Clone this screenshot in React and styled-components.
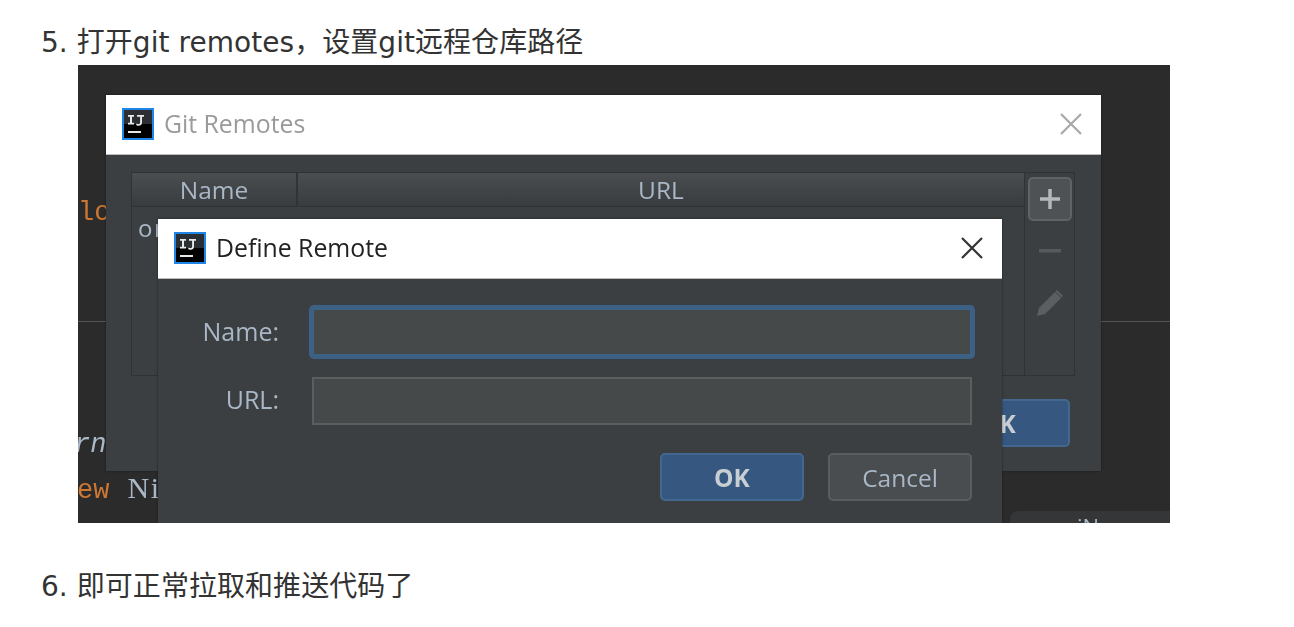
import React from "react";
import styled, { createGlobalStyle } from "styled-components";

const GlobalStyle = createGlobalStyle`
  html, body {
    margin: 0;
    padding: 0;
    background: #fff;
  }
  body {
    font-family: "Open Sans", "Noto Sans CJK SC", sans-serif;
  }
`;

const Page = styled.div`
  width: 1294px;
  height: 627px;
  overflow: hidden;
  background: #fff;
  padding-top: 24px;
  box-sizing: border-box;
`;

const StepList = styled.ol`
  list-style: none;
  margin: 0;
  padding: 0 0 0 41px;
`;

const Step = styled.li`
  display: flex;
  flex-direction: column;
  margin-bottom: ${(p) => p.$gap || 0}px;
`;

const StepText = styled.p`
  margin: 0;
  height: 41px;
  font-family: "DejaVu Sans", "Noto Sans CJK SC", sans-serif;
  font-size: 28px;
  letter-spacing: 0.05px;
  line-height: 38px;
  color: #333;
  white-space: pre;
`;

/* the screenshot inside the article: windows lie on it like on a desktop */
const Shot = styled.div`
  position: relative;
  width: 1092px;
  height: 458px;
  margin-left: 37px;
  background: #2b2b2b;
  overflow: hidden;
  filter: blur(0.45px);
`;

const CodeText = styled.span`
  position: absolute;
  left: ${(p) => p.$x}px;
  top: ${(p) => p.$y}px;
  font-family: "Liberation Mono", "DejaVu Sans Mono", monospace;
  font-size: 27px;
  line-height: 32px;
  font-style: ${(p) => (p.$italic ? "italic" : "normal")};
  color: ${(p) => p.$color || "#a9b7c6"};
  white-space: pre;
`;

const SerifName = styled.span`
  margin-left: 2px;
  font-family: "Liberation Serif", serif;
  font-size: 30px;
  letter-spacing: 1.5px;
  color: #a9b7c6;
`;

const Rule = styled.div`
  position: absolute;
  left: 0;
  right: 0;
  top: 256px;
  height: 1px;
  background: #555;
`;

const TabEdge = styled.div`
  position: absolute;
  left: 932px;
  top: 446px;
  width: 170px;
  height: 20px;
  border-radius: 8px 0 0 0;
  background: #343638;
  overflow: hidden;
`;

const TabText = styled.span`
  position: absolute;
  left: 67px;
  top: 2px;
  font-size: 22px;
  line-height: 26px;
  color: #a9b7c6;
`;

const Win = styled.div`
  position: absolute;
  left: ${(p) => p.$x}px;
  top: ${(p) => p.$y}px;
  width: ${(p) => p.$w}px;
  height: ${(p) => p.$h}px;
  display: flex;
  flex-direction: column;
  background: #3c3f41;
  box-shadow: 0 0 2px rgba(0, 0, 0, 0.5);
`;

const TitleBar = styled.div`
  flex: 0 0 60px;
  display: flex;
  align-items: center;
  gap: 10px;
  padding: 0 19px 2px 16px;
  background: #fff;
  box-sizing: border-box;
  border-bottom: 1px solid #bbb;
`;

const TitleText = styled.span`
  flex: 1;
  font-size: 24.8px;
  line-height: 32px;
  padding-bottom: 1px;
  color: ${(p) => (p.$dim ? "#9a9a9a" : "#222")};
`;

const WinBody = styled.div`
  flex: 1;
  position: relative;
  min-height: 0;
`;

const TableArea = styled.div`
  display: flex;
  margin: 17px 0 0 25px;
  width: 944px;
  height: 204px;
  border: 1px solid #323232;
  box-sizing: border-box;
`;

const Table = styled.div`
  flex: 0 0 892px;
  display: flex;
  flex-direction: column;
  border-right: 1px solid #323232;
`;

const TableHead = styled.div`
  flex: 0 0 33px;
  display: flex;
  background: linear-gradient(#4b4e50, #393c3e);
  border-bottom: 1px solid #323232;
`;

const HeadCell = styled.div`
  flex: ${(p) => (p.$w ? `0 0 ${p.$w}px` : 1)};
  box-sizing: border-box;
  display: flex;
  align-items: center;
  justify-content: center;
  font-size: 24.5px;
  color: #a9b7c6;
  border-right: ${(p) => (p.$w ? "2px solid #333" : "none")};
`;

const TableRow = styled.div`
  padding: 6px 0 0 6px;
  font-size: 24px;
  line-height: 30px;
  letter-spacing: 1.5px;
  color: #a9b7c6;
  white-space: pre;
  overflow: hidden;
`;

const SideBar = styled.div`
  flex: 1;
  display: flex;
  flex-direction: column;
  align-items: center;
  padding-top: 4px;
`;

const ToolButton = styled.div`
  width: 44px;
  height: 44px;
  display: flex;
  align-items: center;
  justify-content: center;
  margin-bottom: ${(p) => p.$mb || 0}px;
  box-sizing: border-box;
  border-radius: 5px;
  background: ${(p) => (p.$active ? "#4e5254" : "transparent")};
  border: ${(p) => (p.$active ? "2px solid #5f6365" : "none")};
`;

const Actions = styled.div`
  position: absolute;
  display: flex;
  gap: 24px;
  right: ${(p) => p.$right}px;
  top: ${(p) => p.$top}px;
`;

const Btn = styled.div`
  width: ${(p) => p.$w || 144}px;
  height: 48px;
  display: flex;
  align-items: center;
  justify-content: center;
  box-sizing: border-box;
  border-radius: 5px;
  font-size: 24.5px;
  font-weight: ${(p) => (p.$primary ? 700 : 400)};
  color: ${(p) => (p.$primary ? "#c9ced3" : "#a9b7c6")};
  background: ${(p) => (p.$primary ? "#365880" : "#4a4d4f")};
  border: 2px solid ${(p) => (p.$primary ? "#43688f" : "#5a5d5f")};
`;

const Form = styled.div`
  display: grid;
  grid-template-columns: 121px 660px;
  grid-auto-rows: 48px;
  row-gap: 21px;
  align-items: center;
  column-gap: 33px;
  padding: 29px 0 0 0;
`;

const Label = styled.label`
  text-align: right;
  font-size: 25px;
  padding-bottom: ${(p) => p.$pb || 0}px;
  color: #a9b7c6;
`;

const Field = styled.div`
  position: relative;
  height: 48px;
  box-sizing: border-box;
  background: #45494a;
  border: 2px solid #5b5d5e;
  ${(p) => p.$focus && "box-shadow: 0 0 0 3px #3d6185; border-color: #3d6185; border-radius: 2px;"}
`;

function IdeaLogo() {
  return (
    <svg width="32" height="32" viewBox="0 0 32 32">
      <rect x="1" y="1" width="30" height="30" fill="#000" stroke="#1f86e8" strokeWidth="2" />
      <rect x="2" y="2" width="28" height="14" fill="#2b2f33" />
      <path d="M6 7h6v1.8h-2v6h2v1.8H6v-1.8h2v-6H6z M15 7h7v1.8h-2v6c0 2-1.400 3-3.500 3-1 0-2-.3-2.500-.7l.7-1.600c.5.4 1.100.6 1.700.6.900 0 1.700-.4 1.700-1.500V8.800H15z" fill="#e8e8e8" />
      <rect x="6" y="23" width="13" height="2" fill="#e8e8e8" />
    </svg>
  );
}

function CloseIcon({ color }) {
  return (
    <svg width="22" height="22" viewBox="0 0 22 22">
      <path d="M1 1l20 20M21 1L1 21" stroke={color} strokeWidth="2.200" fill="none" />
    </svg>
  );
}

function PlusIcon() {
  return (
    <svg width="22" height="22" viewBox="0 0 22 22">
      <path d="M11 1v20M1 11h20" stroke="#b4b8bb" strokeWidth="3.500" fill="none" />
    </svg>
  );
}

function MinusIcon() {
  return (
    <svg width="22" height="4" viewBox="0 0 22 4">
      <rect width="22" height="3.500" fill="#56595b" />
    </svg>
  );
}

function PencilIcon() {
  return (
    <svg width="28" height="28" viewBox="0 0 28 28">
      <path d="M1 27l2-8L19 3l6 6L9 25z" fill="#5c5f61" />
      <path d="M21 1l6 6-1.500 1.500-6-6z" fill="#5c5f61" />
    </svg>
  );
}

export default function App() {
  return (
    <Page>
      <GlobalStyle />
      <StepList>
        <Step $gap={45}>
          <StepText>5. 打开git remotes，设置git远程仓库路径</StepText>
          <Shot>
            <CodeText $x={0} $y={132} $color="#cc7832">lo</CodeText>
            <Rule />
            <CodeText $x={-4} $y={364} $italic>rni</CodeText>
            <CodeText $x={-1} $y={407} $color="#cc7832">ew <SerifName>Ni</SerifName></CodeText>
            <TabEdge><TabText>iN</TabText></TabEdge>

            <Win $x={28} $y={30} $w={995} $h={376}>
              <TitleBar>
                <IdeaLogo />
                <TitleText $dim>Git Remotes</TitleText>
                <CloseIcon color="#a8a8a8" />
              </TitleBar>
              <WinBody>
                <TableArea>
                  <Table>
                    <TableHead>
                      <HeadCell $w={166}>Name</HeadCell>
                      <HeadCell>URL</HeadCell>
                    </TableHead>
                    <TableRow>origin   https://github.com/example/project/demo/repository.git</TableRow>
                  </Table>
                  <SideBar>
                    <ToolButton $active $mb={8}><PlusIcon /></ToolButton>
                    <ToolButton $mb={8}><MinusIcon /></ToolButton>
                    <ToolButton><PencilIcon /></ToolButton>
                  </SideBar>
                </TableArea>
                <Actions $right={31} $top={244}>
                  <Btn $primary>OK</Btn>
                </Actions>
              </WinBody>
            </Win>

            <Win $x={80} $y={154} $w={844} $h={320}>
              <TitleBar>
                <IdeaLogo />
                <TitleText>Define Remote</TitleText>
                <CloseIcon color="#333" />
              </TitleBar>
              <WinBody>
                <Form>
                  <Label $pb={2}>Name:</Label>
                  <Field $focus />
                  <Label $pb={4}>URL:</Label>
                  <Field />
                </Form>
                <Actions $right={30} $top={174}>
                  <Btn $primary>OK</Btn>
                  <Btn>Cancel</Btn>
                </Actions>
              </WinBody>
            </Win>
          </Shot>
        </Step>
        <Step>
          <StepText>6. 即可正常拉取和推送代码了</StepText>
        </Step>
      </StepList>
    </Page>
  );
}
